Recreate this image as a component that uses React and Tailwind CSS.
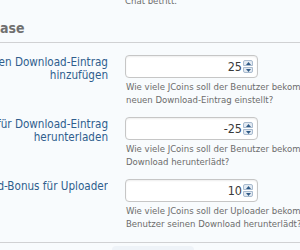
import React from "react";

function Spinner() {
  return (
    <div className="flex flex-col w-[10px] h-[13px] mr-[4px] ml-[1px]">
      <div className="h-[6px] flex items-center justify-center bg-[#e3eaf2] border border-[#a9bbcf] rounded-t-[2px]">
        <svg width="5" height="3" viewBox="0 0 5 3"><path d="M2.5 0 L5 3 L0 3 Z" fill="#2f5a86" /></svg>
      </div>
      <div className="h-[6px] mt-[1px] flex items-center justify-center bg-[#e3eaf2] border border-[#a9bbcf] rounded-b-[2px]">
        <svg width="5" height="3" viewBox="0 0 5 3"><path d="M0 0 L5 0 L2.5 3 Z" fill="#2f5a86" /></svg>
      </div>
    </div>
  );
}

function Row({ label, value, desc }) {
  return (
    <div className="flex">
      <div className="w-[108px] shrink-0 overflow-hidden pt-[1px]">
        {label.map((l, i) => (
          <div key={i} className="flex justify-end whitespace-nowrap text-[11.6px] leading-[13px] text-[#2f5e8d]">
            <span className="shrink-0">{l}</span>
          </div>
        ))}
      </div>
      <div className="ml-[17px] flex-1 min-w-0">
        <div className="w-[133px] h-[23px] rounded-[4px] border border-[#c6c6c6] bg-white shadow-[inset_0_1px_2px_rgba(0,0,0,0.07)] flex items-center justify-end">
          <span className="text-[12.5px] leading-[14px] text-[#3a3a3a]">{value}</span>
          <Spinner />
        </div>
        <div className="mt-[2px] text-[9.5px] leading-[13px] text-[#6c6c6c] whitespace-nowrap pl-[1px]">
          {desc.map((d, i) => (
            <div key={i}>{d}</div>
          ))}
        </div>
      </div>
    </div>
  );
}

export default function App() {
  return (
    <div
      className="w-[300px] h-[250px] overflow-hidden bg-[#f8fbfd]"
      style={{ fontFamily: '"DejaVu Sans Condensed", "DejaVu Sans", Verdana, sans-serif' }}
    >
      <div className="-mt-[6px] ml-[125px] text-[9.5px] leading-[13px] text-[#6c6c6c] whitespace-nowrap">Chat betritt.</div>
      <div className="mt-[12px] pb-[5px] border-b border-[#d0d1d3] text-[14px] leading-[18px] font-bold text-[#707070] whitespace-nowrap">ase</div>
      <div className="flex flex-col gap-[11px] mt-[12px]">
        <Row
          label={["Bonus für einen Download-Eintrag", "hinzufügen"]}
          value="25"
          desc={["Wie viele JCoins soll der Benutzer bekommen, wenn er einen", "neuen Download-Eintrag einstellt?"]}
        />
        <Row
          label={["Kosten für Download-Eintrag", "herunterladen"]}
          value="-25"
          desc={["Wie viele JCoins soll der Benutzer bekommen, wenn er einen", "Download herunterlädt?"]}
        />
        <Row
          label={["Download-Bonus für Uploader"]}
          value="10"
          desc={["Wie viele JCoins soll der Uploader bekommen, wenn ein", "Benutzer seinen Download herunterlädt?"]}
        />
      </div>
      <div className="mt-[12px] border-t border-[#d0d1d3]"></div>
      <div className="mt-[3px] ml-[112px] w-[82px] h-[10px] rounded-t-[4px] bg-[#eef3f8]"></div>
    </div>
  );
}
